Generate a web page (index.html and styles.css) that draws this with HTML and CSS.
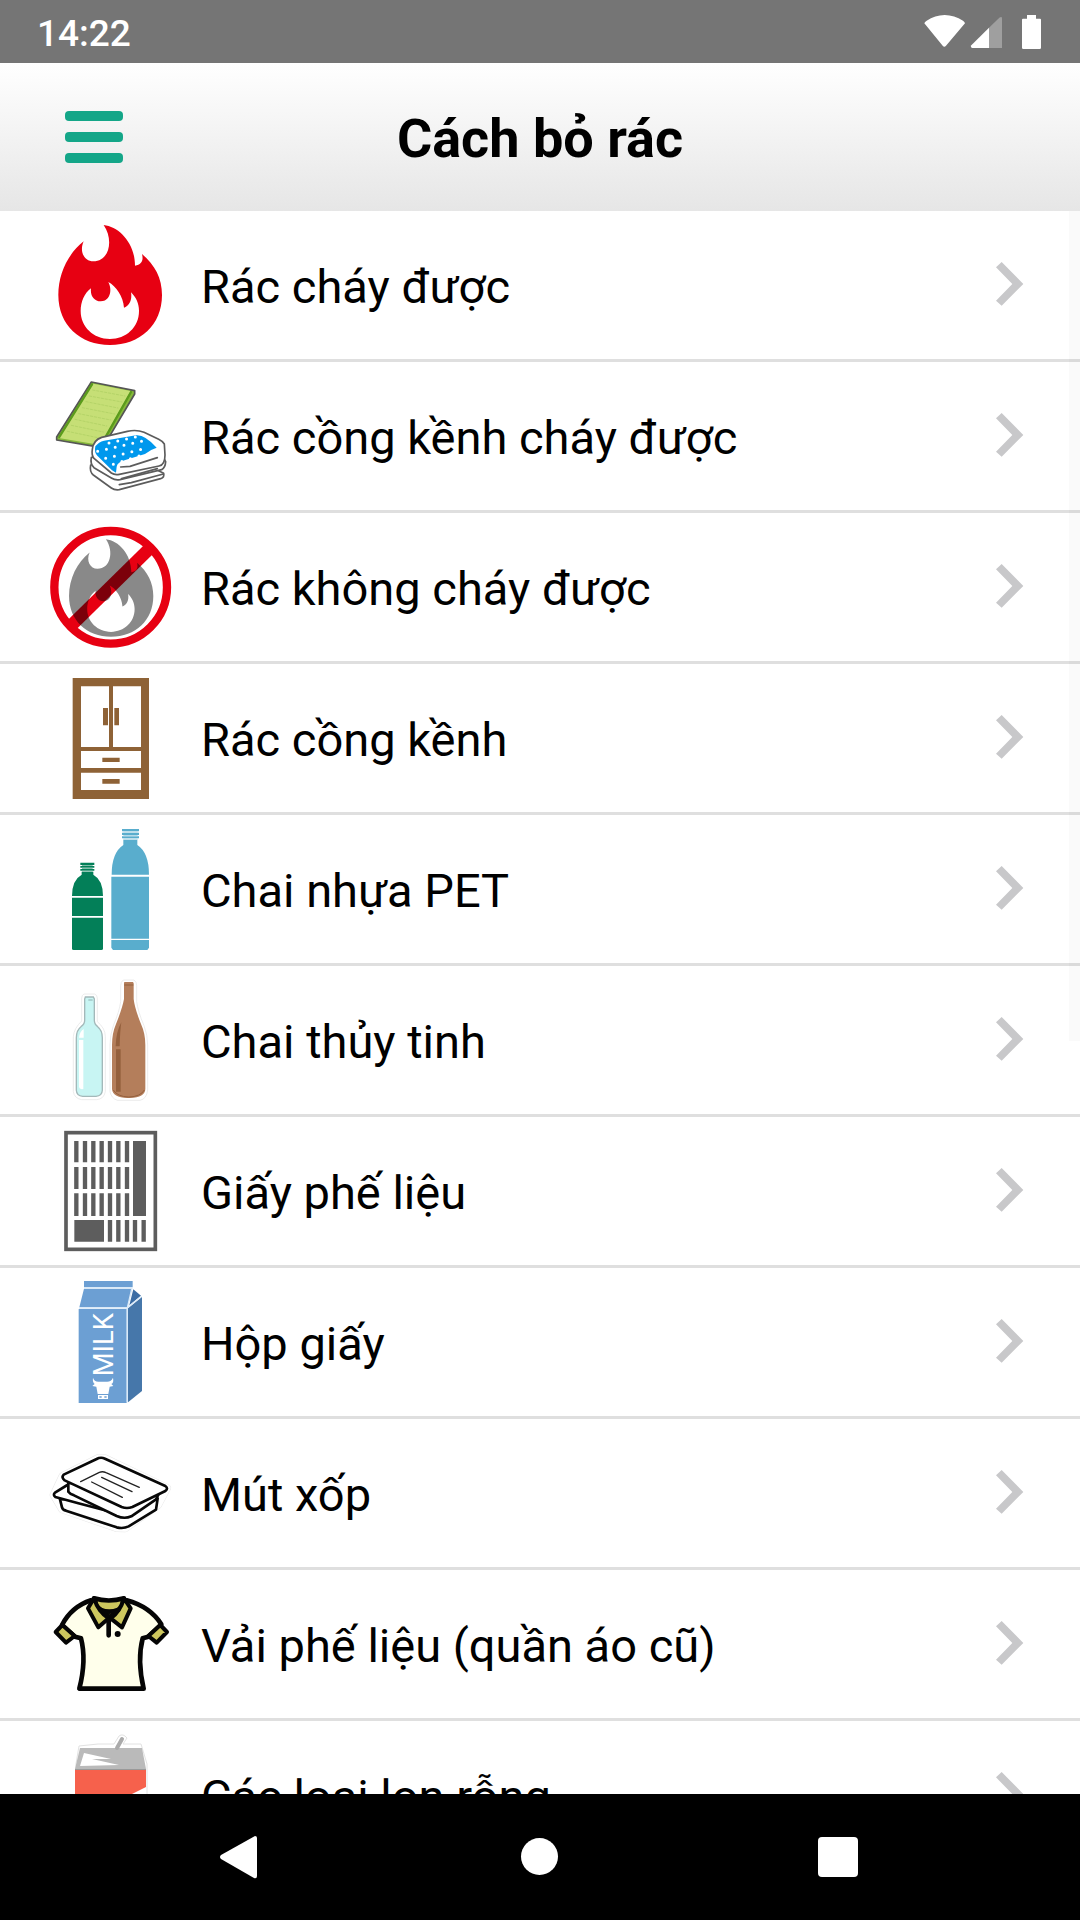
FILE: index.html
```html
<!DOCTYPE html>
<html lang="vi">
<head>
<meta charset="utf-8">
<meta name="viewport" content="width=device-width, initial-scale=1">
<title>Cách bỏ rác</title>
<link rel="stylesheet" href="styles.css">
</head>
<body>
<svg class="defs" width="0" height="0" aria-hidden="true">
  <defs>
    <path id="flame" fill-rule="evenodd" d="M221 45C268 50 315 100 315 167C335 163 341 152 336 132C375 165 396 205 396 255C396 345 330 405 240 405C150 405 85 345 85 255C85 190 115 130 161 94C147 125 163 154 190 154C238 154 252 90 221 45ZM235 216C258 228 280 260 282 293C298 288 307 270 303 247C318 262 327 280 327 303C327 352 288 387 240 387C190 387 152 350 152 303C152 275 163 250 183 235C180 258 193 274 212 274C240 274 248 240 235 216Z"/>
    <path id="chevron" d="M845 786L910 852L845 917L828 902L877 852L828 802Z"/>
  </defs>
</svg>
<div class="screen">
  <div class="status">
    <time class="clock">14:22</time>
    <svg class="status-icons" viewBox="612 42 354 102" role="img" aria-label="Wi-Fi, sóng, pin">
      <path fill="#fff" d="M613 67Q614 62 620 59Q645 43 674 42Q703 43 729 59Q734 62 735 67L678 134Q673 140 668 134Z"/>
      <path fill="#9f9f9f" d="M807 80L838 50Q846 45 846 52V141H807Z"/>
      <path fill="#fff" d="M807 80V141H757Q750 139 754 133Z"/>
      <path fill="#fff" d="M921 42H948V53H960Q963 53 963 56V140Q963 144 959 144H910Q906 144 906 140V56Q906 53 909 53H921Z"/>
    </svg>
  </div>

  <header class="header">
    <button class="menu" type="button" aria-label="Menu">
      <svg class="menu-icon" viewBox="0 0 58 52" aria-hidden="true">
        <g fill="#14a688"><rect width="58" height="10" rx="4"/><rect y="21" width="58" height="10" rx="4"/><rect y="42" width="58" height="10" rx="4"/></g>
      </svg>
    </button>
    <h1 class="title">Cách bỏ rác</h1>
  </header>

  <main class="content">
    <ul class="list">
      <li><a class="row" href="#chay-duoc">
        <svg class="icon" viewBox="60 45 360 360" aria-hidden="true"><use href="#flame" fill="#e70012"/></svg>
        <span class="label">Rác cháy được</span>
        <svg class="chevron" viewBox="828 789 84 132" aria-hidden="true"><use href="#chevron"/></svg>
      </a></li>
      <li><a class="row" href="#cong-kenh-chay-duoc">
        <svg class="icon" viewBox="60 498 360 360" aria-hidden="true">
          <g stroke-linejoin="round" stroke-linecap="round">
            <path fill="#85b83a" stroke="#555" stroke-width="5" d="M184 516L314 542L314 552L226 700L212 712L80 690V681Z"/>
            <path fill="#c6df76" d="M190 521L302 543L211 705L86 684Z"/>
            <path fill="none" stroke="#5b9b1c" stroke-width="7" d="M186 523L88 681M303 546L216 700"/>
            <path fill="none" stroke="#b5d468" stroke-width="3" stroke-dasharray="7 5" d="M188 540L285 558M178 558L276 576M168 575L264 594M157 593L254 612M146 611L242 630M135 628L230 648M124 646L220 666M112 664L208 684"/>
            <g fill="#fff" stroke="#5c5c5c" stroke-width="5">
              <path d="M182 765Q178 785 190 795L244 834Q254 841 268 839L392 806Q404 802 401 790L300 740Z"/>
              <path d="M184 742Q180 762 192 773L244 804Q256 812 270 809L395 779Q406 773 407 755L395 735Z"/>
              <path d="M187 718Q184 736 192 745L244 789Q254 796 268 793L387 768Q405 765 405 735L403 702Q398 694 386 688L342 667Q320 658 292 664L215 682Q190 690 187 718Z"/>
            </g>
            <path fill="#0098ed" d="M196 709Q206 696 222 692L318 676Q344 673 380 713Q360 719 345 732L286 750Q262 756 260 770L258 788L246 781L202 737Q192 728 196 709Z"/>
            <path fill="none" stroke="#fff" stroke-width="9" stroke-dasharray="0 27" d="M237 699L320 680M203 724L350 690M227 745L350 714M250 763L345 732"/>
            <path fill="none" stroke="#5c5c5c" stroke-width="5" d="M272 771L300 769L382 743M268 824L304 818L400 792M275 806L382 776"/>
          </g>
        </svg>
        <span class="label">Rác cồng kềnh cháy được</span>
        <svg class="chevron" viewBox="828 789 84 132" aria-hidden="true"><use href="#chevron"/></svg>
      </a></li>
      <li><a class="row" href="#khong-chay-duoc">
        <svg class="icon icon-ban" viewBox="60 51 360 360" aria-hidden="true">
          <use href="#flame" fill="#898989" transform="translate(48 51) scale(.813)"/>
          <path class="ban-bar" fill="none" stroke="#e70012" stroke-width="38" d="M126 344L358 116"/>
          <circle cx="242" cy="232" r="169" fill="none" stroke="#e70012" stroke-width="25"/>
        </svg>
        <span class="label">Rác không cháy được</span>
        <svg class="chevron" viewBox="828 789 84 132" aria-hidden="true"><use href="#chevron"/></svg>
      </a></li>
      <li><a class="row" href="#cong-kenh">
        <svg class="icon" viewBox="60 504 360 360" aria-hidden="true">
          <path fill="#8e6236" fill-rule="evenodd" d="M128 504H357V867H128ZM153 529V711H237V529ZM249 529V711H333V529ZM153 723V774H333V723ZM153 788V840H333V788Z"/>
          <path fill="#8e6236" d="M219 594H234V646H219ZM253 594H267V646H253ZM217 743H269V756H217ZM217 807H269V821H217Z"/>
        </svg>
        <span class="label">Rác cồng kềnh</span>
        <svg class="chevron" viewBox="828 789 84 132" aria-hidden="true"><use href="#chevron"/></svg>
      </a></li>
      <li><a class="row" href="#chai-pet">
        <svg class="icon" viewBox="60 42 360 360" aria-hidden="true">
          <path fill="#037f58" d="M151 143H193V150H151ZM151 153H193V158H151ZM151 162H193V167H151ZM155 170H190V179Q219 195 219 243H126Q126 195 155 179ZM126 248H219V303H126ZM126 308H219V401Q219 405 214 405H131Q126 405 126 401Z"/>
          <path fill="#7fbfa9" d="M156 150H188V153H156ZM156 158H188V162H156ZM156 167H188V170H156Z"/>
          <path fill="#59adcd" d="M276 42H327V49H276ZM276 53H327V60H276ZM276 64H327V70H276ZM280 74H322V90Q357 113 357 179H245Q245 113 280 90ZM244 185H357V371H244ZM244 375H357V398L352 405H249L244 398Z"/>
          <path fill="#b6dbe9" d="M280 49H323V53H280ZM280 60H323V64H280ZM280 70H323V74H280Z"/>
        </svg>
        <span class="label">Chai nhựa PET</span>
        <svg class="chevron" viewBox="828 789 84 132" aria-hidden="true"><use href="#chevron"/></svg>
      </a></li>
      <li><a class="row" href="#chai-thuy-tinh">
        <svg class="icon" viewBox="60 495 360 360" aria-hidden="true">
          <g fill="#fff" stroke="#e2e2e2" stroke-width="2">
            <path d="M162 537H194Q202 540 202 550V620Q226 640 226 665V830Q222 852 200 854H155Q133 850 130 830V665Q132 640 155 618V550Q155 540 162 537Z"/>
            <path d="M280 495H312Q320 500 320 512V560Q324 590 342 632Q353 660 353 690V825Q350 852 330 856H262Q244 850 240 830V690Q240 660 250 632Q268 590 272 560V512Q272 500 280 495Z"/>
          </g>
          <path fill="#c8f5f3" stroke="#a3b8b9" stroke-width="4" d="M166 546H190L193 552V616Q193 628 203 635Q217 646 217 668V826Q216 843 198 844H158Q140 843 139 826V668Q139 646 153 635Q164 628 164 616V552Z"/>
          <path fill="#fff" d="M147 675H160V822Q148 824 147 816ZM147 668Q149 650 161 642V668Z"/>
          <path fill="none" stroke="#8fb0b0" stroke-width="3" d="M175 555H188"/>
          <path fill="#b47e5b" d="M283 501H309L311 505V552Q314 580 333 627Q346 655 346 690V822Q345 848 300 849H292Q248 848 246 822V690Q246 655 258 627Q277 580 282 552V505Z"/>
          <path fill="#94603d" d="M258 703H272V830H258ZM257 694Q258 650 274 622Q270 650 269 694Z"/>
          <path fill="none" stroke="#94603d" stroke-width="3" d="M283 510H310M250 825Q262 845 296 846Q332 845 343 825"/>
        </svg>
        <span class="label">Chai thủy tinh</span>
        <svg class="chevron" viewBox="828 789 84 132" aria-hidden="true"><use href="#chevron"/></svg>
      </a></li>
      <li><a class="row" href="#giay-phe-lieu">
        <svg class="icon" viewBox="60 48 360 360" aria-hidden="true">
          <rect x="108" y="53" width="268" height="350" fill="none" stroke="#5d5d5d" stroke-width="11"/>
          <path fill="none" stroke="#5d5d5d" stroke-width="13" d="M139 78V142M165 78V142M190 78V142M215 78V142M240 78V142M265 78V142M291 78V142M139 156V222M165 156V222M190 156V222M215 156V222M240 156V222M265 156V222M291 156V222M139 235V303M165 235V303M190 235V303M215 235V303M240 235V303M265 235V303M291 235V303M240 315V380M265 315V380M291 315V380M315 315V380M341 315V380"/>
          <path fill="#5d5d5d" d="M309 78H348V303H309ZM133 315H222V380H133Z"/>
        </svg>
        <span class="label">Giấy phế liệu</span>
        <svg class="chevron" viewBox="828 789 84 132" aria-hidden="true"><use href="#chevron"/></svg>
      </a></li>
      <li><a class="row" href="#hop-giay">
        <svg class="icon" viewBox="60 501 360 360" aria-hidden="true">
          <path fill="#6c9fd3" d="M162 498H308V516H162ZM162 521H306L292 577H148ZM146 582H290V864H146Z"/>
          <path fill="#3a6ca4" d="M310 523L333 542L298 571Z"/>
          <path fill="#4677aa" d="M294 580L336 546V828L294 862Z"/>
          <path fill="none" stroke="#d9e9f8" stroke-width="4" d="M162 518H306L292 579H147M292 579V862M294 577L334 544"/>
          <text class="milk" transform="translate(248 784) rotate(-90)">MILK</text>
          <path fill="#fff" d="M189 788Q193 802 209 800H229Q244 801 249 788Q252 804 244 807L250 813L239 815L235 837H203L199 815L187 813L194 807Q187 801 189 788ZM204 840H234V852H204Z"/>
          <path fill="#6c9fd3" d="M208 844H215V848H208ZM223 844H230V848H223Z"/>
        </svg>
        <span class="label">Hộp giấy</span>
        <svg class="chevron" viewBox="828 789 84 132" aria-hidden="true"><use href="#chevron"/></svg>
      </a></li>
      <li><a class="row" href="#mut-xop">
        <svg class="icon" viewBox="60 39 360 360" aria-hidden="true">
          <g fill="#fff" stroke-linejoin="round" stroke-linecap="round">
            <path stroke="#e6e6e6" stroke-width="24" d="M98 168L205 114L225 115L411 204L384 255L285 325L260 324L97 268L71 225Z"/>
            <path stroke="#fff" stroke-width="21" d="M98 168L205 114L225 115L411 204L384 255L285 325L260 324L97 268L71 225Z"/>
            <g stroke="#080808" stroke-width="8">
              <path d="M90 238L96 262Q98 270 108 272L260 322Q280 327 296 319L378 269L383 235L300 220Z"/>
              <path d="M112 195L75 218Q68 225 76 231L145 250L225 271L262 230Z"/>
              <path d="M115 188V215Q120 222 132 226L260 288Q283 298 304 289L378 238L386 222Z"/>
              <path d="M101 164L200 117Q212 110 225 116L406 198Q416 205 406 213L307 261Q291 267 275 261L104 181Q93 173 101 164Z"/>
            </g>
            <path fill="none" stroke="#222" stroke-width="4" d="M152 185L208 157Q218 153 228 158L328 202M215 172L306 215M185 186L277 232"/>
          </g>
        </svg>
        <span class="label">Mút xốp</span>
        <svg class="chevron" viewBox="828 789 84 132" aria-hidden="true"><use href="#chevron"/></svg>
      </a></li>
      <li><a class="row" href="#vai-phe-lieu">
        <svg class="icon" viewBox="60 492 360 360" aria-hidden="true">
          <g stroke="#050505" stroke-width="14" stroke-linejoin="round" stroke-linecap="round">
            <path fill="#ffffeb" d="M183 541Q125 560 96 615L135 650L153 655Q170 720 148 806H341Q321 720 338 655L355 650L394 613Q360 560 290 541L238 600Z"/>
            <path fill="#cdc75e" stroke-width="12" d="M97 615L77 636L108 668L134 648ZM391 615L411 636L380 668L355 648Z"/>
            <path fill="#cdc75e" d="M192 535Q236 548 282 535L276 560L240 592L200 560Z"/>
            <path fill="#cdc75e" stroke-width="12" d="M192 535L174 565L205 622L236 595Q205 575 192 535ZM282 535L302 565L276 622L242 595Q270 575 282 535Z"/>
            <path fill="none" d="M212 570Q238 580 264 570M236 600V646"/>
          </g>
          <circle cx="263" cy="642" r="9" fill="#050505"/>
        </svg>
        <span class="label">Vải phế liệu (quần áo cũ)</span>
        <svg class="chevron" viewBox="828 789 84 132" aria-hidden="true"><use href="#chevron"/></svg>
      </a></li>
      <li><a class="row" href="#lon-rong">
        <svg class="icon" viewBox="50 1735 120 120" aria-hidden="true">
          <path fill="#fff" stroke="#e2e2e2" d="M76 1764L79 1746L98 1744H114L119 1736Q123 1733 127 1738L123 1744H141L147 1764V1850H75Z"/>
          <path fill="#bababa" d="M80 1748H142L146 1769V1771H75V1769Z"/>
          <path stroke="#aaa" stroke-width="4" stroke-linecap="round" d="M117 1748L122 1739"/>
          <path fill="#fff" d="M84 1753L111 1759H92L119 1765L80 1766Z"/>
          <path fill="#f6614c" d="M75 1769H146V1787L130 1795V1842L140 1850H80L75 1845Z"/>
          <path fill="#999" d="M75 1769H146V1770H75Z"/>
        </svg>
        <span class="label">Các loại lon rỗng</span>
        <svg class="chevron" viewBox="828 789 84 132" aria-hidden="true"><use href="#chevron"/></svg>
      </a></li>
    </ul>
    <div class="scroll-thumb"></div>
  </main>

  <nav class="navbar" aria-label="Điều hướng">
    <button class="nav-button" type="button" aria-label="Quay lại">
      <svg class="nav-icon" viewBox="0 0 48 48" aria-hidden="true"><path d="M39 3Q41 3 41 5V43Q41 46 38 45L5 26Q3 24 5 22Z"/></svg>
    </button>
    <button class="nav-button" type="button" aria-label="Trang chủ">
      <svg class="nav-icon" viewBox="0 0 48 48" aria-hidden="true"><circle cx="23.500" cy="23.500" r="18.500"/></svg>
    </button>
    <button class="nav-button" type="button" aria-label="Gần đây">
      <svg class="nav-icon" viewBox="0 0 48 48" aria-hidden="true"><rect x="2" y="4" width="40" height="40" rx="4"/></svg>
    </button>
  </nav>
</div>
</body>
</html>
```
FILE: styles.css
```css
* {
  box-sizing: border-box;
}

body {
  margin: 0;
  background: #fff;
  color: #000;
  font-family: Roboto, "Noto Sans", sans-serif;
}

svg {
  display: block;
  flex: none;
  overflow: visible;
}

button {
  padding: 0;
  border: 0;
  background: none;
  cursor: pointer;
}

.defs {
  position: absolute;
}

.screen {
  display: flex;
  flex-direction: column;
  height: 100vh;
}

.status {
  display: flex;
  flex: none;
  align-items: center;
  justify-content: space-between;
  height: 63px;
  padding: 0 38px 0 37px;
  background: #757575;
  color: #fff;
}

.clock {
  padding-top: 4px;
  font-size: 37px;
  font-weight: 500;
  line-height: 44px;
}

.status-icons {
  width: 118px;
  height: 34px;
}

.header {
  display: grid;
  flex: none;
  grid-template-columns: 58px 1fr 58px;
  align-items: center;
  height: 148px;
  padding: 0 65px;
  background: linear-gradient(#fff, #e6e6e6);
}

.menu-icon {
  width: 58px;
  height: 52px;
}

.title {
  margin: 0;
  padding-top: 4px;
  font-size: 54px;
  font-weight: 700;
  line-height: 64px;
  text-align: center;
}

.content {
  position: relative;
  flex: 1;
  min-height: 0;
  overflow: hidden;
}

.list {
  margin: 0;
  padding: 0;
  list-style: none;
}

.row {
  display: flex;
  align-items: center;
  padding: 14px 56px 14px 50px;
  border-bottom: 3px solid #dfdfdf;
  color: inherit;
  text-decoration: none;
}

.icon {
  width: 120px;
  height: 120px;
}

.icon-ban {
  isolation: isolate;
}

.ban-bar {
  mix-blend-mode: multiply;
}

.milk {
  fill: #fff;
  font-size: 82px;
}

.label {
  flex: 1;
  padding: 4px 0 0 31px;
  font-size: 47px;
  line-height: 56px;
}

.chevron {
  width: 28px;
  height: 44px;
  fill: #c8c8ca;
}

.scroll-thumb {
  position: absolute;
  top: 0;
  right: 0;
  width: 11px;
  height: 830px;
  background: rgba(0, 0, 0, 0.02);
}

.navbar {
  display: flex;
  flex: none;
  align-items: center;
  justify-content: center;
  height: 126px;
  background: #000;
}

.nav-button {
  display: flex;
  justify-content: center;
  width: 300px;
}

.nav-icon {
  width: 48px;
  height: 48px;
  fill: #fff;
}
```
